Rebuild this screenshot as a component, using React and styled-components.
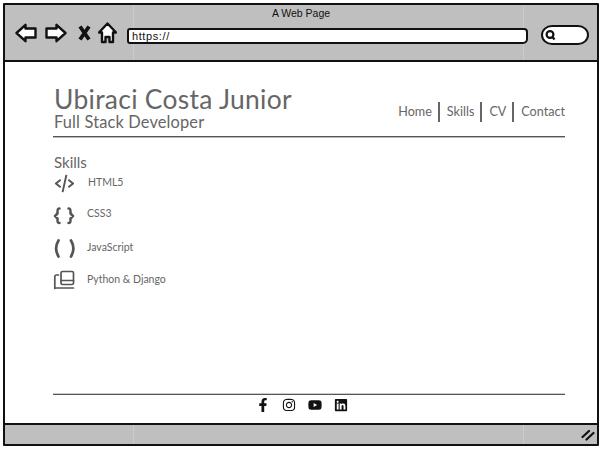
import React from "react";
import styled, { createGlobalStyle } from "styled-components";
import { BiCodeAlt } from "react-icons/bi";
import { FaFacebookF, FaInstagram, FaYoutube, FaLinkedin } from "react-icons/fa";

const Global = createGlobalStyle`
  html, body { margin: 0; padding: 0; background: #fff; }
  body { font-family: "Lato", "Liberation Sans", sans-serif; }
`;

const grayBar = `
  background-color: #bfbfbf;
  background-image:
    linear-gradient(#cbcbcb, #cbcbcb),
    linear-gradient(#cbcbcb, #cbcbcb);
  background-size: 1px 100%, 1px 100%;
  background-repeat: no-repeat;
  background-position: 128px 0, 518px 0;
`;

const Sketch = styled.div`
  width: 596px;
  height: 443px;
  margin: 3px 0 0 3px;
  box-sizing: border-box;
  border: 2px solid #111;
  border-radius: 1px;
  display: flex;
  flex-direction: column;
  overflow: hidden;
`;

const Chrome = styled.header`
  ${grayBar}
  height: 57px;
  flex: none;
  box-sizing: border-box;
  border-bottom: 2px solid #111;
  display: flex;
  flex-direction: column;
  padding-top: 1px;
`;

const PageTitle = styled.div`
  font-family: "Liberation Sans", sans-serif;
  font-size: 10.5px;
  line-height: 14px;
  color: #111;
  text-align: center;
`;

const NavRow = styled.div`
  display: flex;
  align-items: center;
  padding: 0 0 0 10px;
  height: 26px;
`;

const Glyph = styled.svg`
  flex: none;
  display: block;
  margin-right: ${(p) => p.$gap}px;
`;

const Address = styled.div`
  flex: none;
  width: 401px;
  height: 16px;
  margin: 6px 0 0 10px;
  box-sizing: border-box;
  border: 2px solid #111;
  border-radius: 3px 4px 5px 3px;
  background: #fff;
  font-family: "Liberation Sans", sans-serif;
  font-size: 11px;
  letter-spacing: 0.6px;
  line-height: 12px;
  padding-left: 3px;
  color: #111;
`;

const Search = styled.div`
  flex: none;
  width: 48px;
  height: 20px;
  margin: 4px 0 0 13px;
  box-sizing: border-box;
  border: 2px solid #111;
  border-radius: 11px / 10px;
  background: #fff;
  display: flex;
  align-items: center;
  padding-left: 1px;
`;

const Content = styled.main`
  flex: 1;
  display: flex;
  flex-direction: column;
  padding: 19px 32px 0 48px;
  color: #666;
  font-family: "Lato", sans-serif;
`;

const Masthead = styled.div`
  height: 50px;
  display: flex;
  justify-content: space-between;
  align-items: flex-end;
  border-bottom: 1px solid #555;
  box-shadow: 0 1px 0 #bbb;
  padding-left: 1px;
  padding-bottom: 5px;
  box-sizing: content-box;
`;

const Brand = styled.div`
  display: flex;
  flex-direction: column;
`;

const Name = styled.h1`
  margin: 0;
  font-weight: 400;
  font-size: 26.4px;
  line-height: 26px;
  letter-spacing: 0.3px;
  color: #666;
`;

const Role = styled.h2`
  margin: 0;
  font-weight: 400;
  font-size: 16.4px;
  line-height: 19px;
  letter-spacing: 0.15px;
  color: #666;
`;

const Nav = styled.nav`
  display: flex;
  align-items: center;
  margin-bottom: 9px;
`;

const NavLink = styled.a`
  font-size: 12.6px;
  line-height: 20px;
  color: #666;
  padding: 0 6px 0 7px;
  border-left: ${(p) => (p.$first ? "none" : "2px solid #666")};
  &:last-child { padding-right: 0; }
`;

const SectionTitle = styled.h3`
  margin: 16px 0 0;
  font-weight: 400;
  font-size: 15px;
  line-height: 18px;
  padding-left: 1px;
  color: #666;
`;

const SkillList = styled.ul`
  list-style: none;
  margin: 1px 0 0;
  padding: 0;
`;

const Skill = styled.li`
  display: flex;
  align-items: center;
  height: ${(p) => p.$h}px;
  font-size: 10.5px;
  color: #666;
`;

const SkillIcon = styled.span`
  width: 34px;
  flex: none;
  display: flex;
  font-size: 23px;
  color: #555;
  svg { display: block; }
`;

const SkillName = styled.span`
  position: relative;
  top: -1.5px;
  margin-left: ${(p) => p.$nudge}px;
`;

const Footer = styled.footer`
  margin-top: auto;
  margin-bottom: 11px;
  border-top: 1px solid #555;
  box-shadow: 0 -1px 0 #ccc;
  display: flex;
  justify-content: center;
  gap: 12px;
  padding: 3px 14px 0 0;
  color: #111;
  font-size: 14px;
`;

const Social = styled.a`
  width: 14px;
  height: 14px;
  display: flex;
  align-items: center;
  justify-content: center;
`;

const StatusBar = styled.footer`
  ${grayBar}
  height: 21px;
  flex: none;
  box-sizing: border-box;
  border-top: 2px solid #111;
  display: flex;
  justify-content: flex-end;
  align-items: center;
  padding-right: 2px;
`;

const stroke = { fill: "#fff", stroke: "#111", strokeWidth: 2.4, strokeLinejoin: "round" };

const iconProps = { width: 23, height: 23, viewBox: "0 0 23 23", fill: "none", stroke: "#555", strokeLinecap: "round", strokeLinejoin: "round" };

const Curly = () => (
  <svg {...iconProps} strokeWidth="2.5">
    <path d="M6.5 5.5 C4.5 5.5 4.5 6.5 4.5 8.5 V10.5 L2 13 L4.5 15.5 V17.5 C4.5 19.5 4.5 20 6.5 20" />
    <path d="M15.5 5.5 C17.5 5.5 17.5 6.5 17.5 8.5 V10.5 L20 13 L17.5 15.5 V17.5 C17.5 19.5 17.5 20 15.5 20" />
  </svg>
);

const Parens = () => (
  <svg {...iconProps} strokeWidth="2.7">
    <path d="M5.5 3.5 C2.5 8.5 2.5 14.5 5.5 19.5" />
    <path d="M18 3.5 C21 8.5 21 14.5 18 19.5" />
  </svg>
);

const Panes = () => (
  <svg {...iconProps} strokeWidth="1.7">
    <rect x="8" y="2.5" width="12.5" height="13" rx="1.5" />
    <path d="M8 11.5 H20.5" />
    <path d="M5.5 6 H3.5 Q1.8 6 1.8 8 V19.5" />
    <path d="M1.8 19 H20.5" />
  </svg>
);

const skills = [
  { name: "HTML5", h: 23, nudge: 1, icon: <BiCodeAlt /> },
  { name: "CSS3", h: 38, nudge: 0, icon: <Curly /> },
  { name: "JavaScript", h: 31, nudge: 0, icon: <Parens /> },
  { name: "Python & Django", h: 33, nudge: 0, icon: <Panes /> },
];

export default function App() {
  return (
    <>
      <Global />
      <Sketch>
        <Chrome>
          <PageTitle>A Web Page</PageTitle>
          <NavRow>
            <Glyph $gap={8} width="22" height="20" viewBox="0 0 22 20">
              <path {...stroke} d="M1.5 10 L10.5 1.8 V5.5 H20.5 V14.5 H10.5 V18.2 Z" />
            </Glyph>
            <Glyph $gap={11} width="22" height="20" viewBox="0 0 22 20">
              <path {...stroke} d="M20.5 10 L11.5 1.8 V5.5 H1.5 V14.5 H11.5 V18.2 Z" />
            </Glyph>
            <Glyph $gap={7} width="13" height="16" viewBox="0 0 13 16">
              <path fill="none" stroke="#111" strokeWidth="3.8" d="M2 1.5 L11 14.5 M11 1.5 L2 14.5" />
            </Glyph>
            <Glyph $gap={0} width="19" height="22" viewBox="0 0 19 22">
              <path {...stroke} d="M9.5 1.5 L18 10.5 H15 V20 H11.5 V15 H7.5 V20 H4 V10.5 H1 Z" />
            </Glyph>
            <Address>https://</Address>
            <Search>
              <svg width="12" height="12" viewBox="0 0 12 12">
                <circle cx="6" cy="5.5" r="3.4" fill="none" stroke="#111" strokeWidth="2.2" />
                <path d="M8.5 8 L10.5 10.5" stroke="#111" strokeWidth="2.2" />
              </svg>
            </Search>
          </NavRow>
        </Chrome>

        <Content>
          <Masthead>
            <Brand>
              <Name>Ubiraci Costa Junior</Name>
              <Role>Full Stack Developer</Role>
            </Brand>
            <Nav>
              <NavLink $first>Home</NavLink>
              <NavLink>Skills</NavLink>
              <NavLink>CV</NavLink>
              <NavLink>Contact</NavLink>
            </Nav>
          </Masthead>
          <SectionTitle>Skills</SectionTitle>
          <SkillList>
            {skills.map((s) => (
              <Skill key={s.name} $h={s.h}>
                <SkillIcon>{s.icon}</SkillIcon>
                <SkillName $nudge={s.nudge}>{s.name}</SkillName>
              </Skill>
            ))}
          </SkillList>
          <Footer>
            <Social><FaFacebookF /></Social>
            <Social><FaInstagram /></Social>
            <Social><FaYoutube /></Social>
            <Social><FaLinkedin /></Social>
          </Footer>
        </Content>

        <StatusBar>
          <svg width="14" height="12" viewBox="0 0 14 12" fill="none" stroke="#111" strokeWidth="2.2" strokeLinecap="round">
            <path d="M1.5 8 L8 2" />
            <path d="M5.5 10.5 L12.5 4" />
          </svg>
        </StatusBar>
      </Sketch>
    </>
  );
}
